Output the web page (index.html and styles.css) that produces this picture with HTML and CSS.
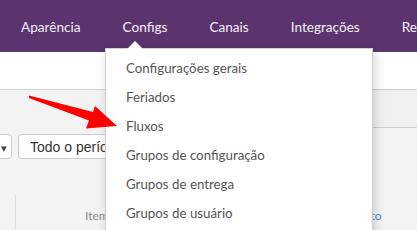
FILE: index.html
```html
<!DOCTYPE html>
<html lang="pt-BR">
<head>
<meta charset="utf-8">
<title>Configs</title>
<link rel="stylesheet" href="styles.css">
</head>
<body>
<div class="page">
  <header class="nav">
    <a class="nav-item">Aparência</a>
    <a class="nav-item">Configs</a>
    <a class="nav-item">Canais</a>
    <a class="nav-item">Integrações</a>
    <a class="nav-item">Re</a>
  </header>
  <div class="subbar"></div>
  <main class="content">
    <div class="tabs-row">
      <div class="tabs-left"></div>
      <div class="tabs-right"></div>
    </div>
    <div class="toolbar">
      <button class="btn btn-select"><span class="caret-down">▾</span></button>
      <button class="btn btn-period">Todo o período</button>
    </div>
    <div class="table">
      <div class="col col-check"></div>
      <div class="col col-item">Item</div>
      <div class="col col-date">Produto</div>
    </div>
  </main>

  <div class="dropdown">
    <span class="dropdown-caret"></span>
    <ul class="menu">
      <li>Configurações gerais</li>
      <li>Feriados</li>
      <li>Fluxos</li>
      <li>Grupos de configuração</li>
      <li>Grupos de entrega</li>
      <li>Grupos de usuário</li>
    </ul>
  </div>

  <svg class="arrow" width="417" height="230" viewBox="0 0 417 230">
    <polygon points="29,95.5 93,112 95,106 117,126 86,128.5 89,120.5 29,98" fill="#ff0000"/>
  </svg>
</div>
</body>
</html>
```

FILE: styles.css
```css
* { box-sizing: border-box; }
html, body { margin: 0; padding: 0; }
body {
  width: 417px;
  height: 230px;
  overflow: hidden;
  font-family: Lato, "Open Sans", sans-serif;
  background: #f3f3f3;
}
.page {
  position: relative;
  width: 417px;
  height: 230px;
  overflow: hidden;
}
.nav {
  height: 52px;
  background: #5b346f;
  display: flex;
  align-items: center;
  gap: 42px;
  padding-left: 21px;
  padding-top: 1px;
  white-space: nowrap;
}
.nav-item {
  color: #f4eff6;
  font-size: 13.6px;
  flex: none;
}
.subbar {
  height: 38px;
  background: #ffffff;
  border-bottom: 1px solid #cfcfcf;
}
.content {
  background: #f3f3f3;
  height: 140px;
}
.tabs-row {
  display: flex;
  height: 38px;
}
.tabs-left { width: 372px; }
.tabs-right {
  flex: 1;
  background: #f0f0f0;
  border-bottom: 1px solid #cfcfcf;
}
.toolbar {
  display: flex;
  gap: 6px;
  margin-top: 6px;
  margin-left: -10px;
}
.btn {
  height: 25px;
  border: 1px solid #cccccc;
  border-radius: 4px;
  background: #ffffff;
  font-family: "Liberation Sans", Arial, sans-serif;
  font-size: 14px;
  color: #333333;
  padding: 0 11px;
  text-align: left;
}
.btn-select {
  width: 22px;
  padding: 0 0 0 10px;
}
.caret-down {
  font-size: 11px;
  color: #444;
}
.btn-period {
  width: 140px;
}
.table {
  display: flex;
  margin-top: 36px;
  height: 40px;
  font-size: 12px;
  white-space: nowrap;
}
.col-check {
  width: 16px;
  border-right: 1px solid #dddddd;
}
.col-item {
  width: 323px;
  padding-left: 69px;
  padding-top: 13px;
  color: #8a8a8a;
}
.col-date {
  padding-top: 13px;
  color: #5d84c4;
}
.dropdown {
  position: absolute;
  left: 105px;
  top: 48px;
  width: 268px;
  height: 200px;
  background: #ffffff;
  border: 1px solid #cfcfcf;
  box-shadow: 2px 2px 10px rgba(0, 0, 0, 0.16);
}
.dropdown-caret {
  position: absolute;
  left: 21px;
  top: -8px;
  width: 0;
  height: 0;
  border-left: 8px solid transparent;
  border-right: 8px solid transparent;
  border-bottom: 8px solid #ffffff;
}
.menu {
  list-style: none;
  margin: 0;
  padding: 5px 0 0 20px;
}
.menu li {
  height: 29px;
  line-height: 29px;
  font-size: 13.3px;
  color: #555555;
  white-space: nowrap;
}
.arrow {
  position: absolute;
  left: 0;
  top: 0;
  pointer-events: none;
}
```
